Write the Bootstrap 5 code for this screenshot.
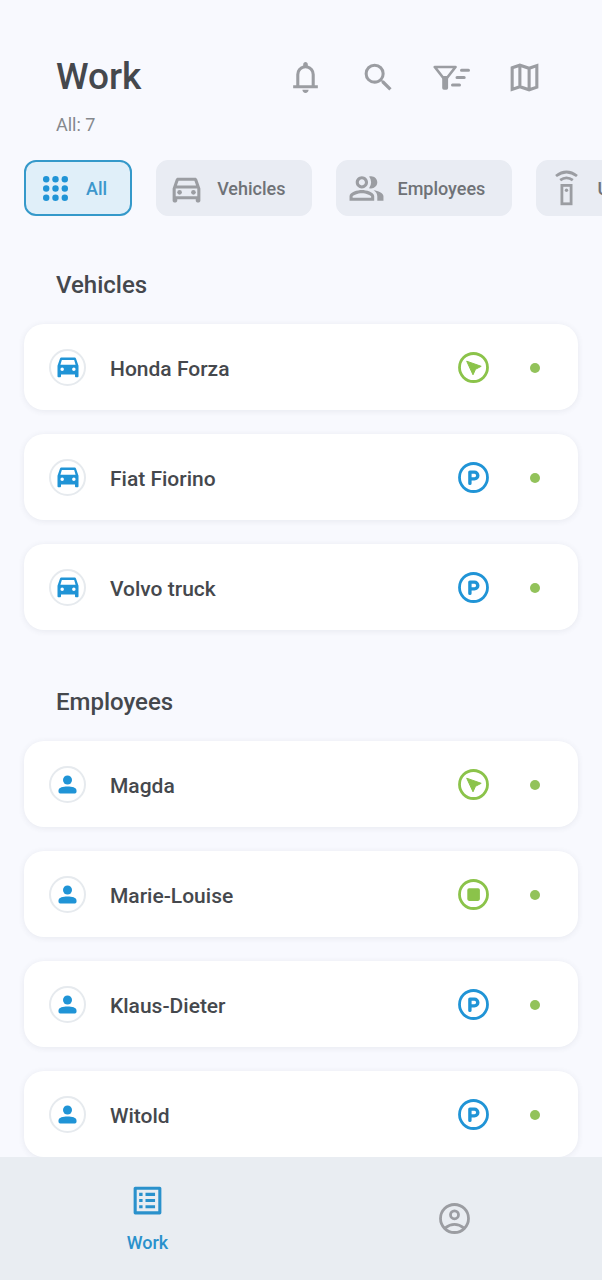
<!DOCTYPE html>
<html lang="en">
<head>
<meta charset="utf-8">
<meta name="viewport" content="width=device-width, initial-scale=1">
<title>Work</title>
<link href="https://cdn.jsdelivr.net/npm/bootstrap@5.3.0/dist/css/bootstrap.min.css" rel="stylesheet">
<style>
  :root { --ink:#45484d; --muted:#9b9da2; --label:#6f7277; --blue:#2094d6; --green:#8bc34a; --page:#f8f9fe; }
  body { font-family: Roboto, "Liberation Sans", sans-serif; background: var(--page); color: var(--ink); }
  svg { display: block; flex: none; }
  .app-head { padding: 52px 59px 0 56px; }
  .app-title { font-size: 37px; line-height: 50px; font-weight: 500; }
  .app-count { font-size: 18px; line-height: 24px; margin-top: 11px; color: #85888d; }
  .tools { gap: 36px; color: var(--muted); }
  .icon-btn { border: 0; background: none; padding: 0; color: inherit; }
  .chips { gap: 24px; padding: 23px 24px 0; overflow-x: auto; scrollbar-width: none; }
  .chips::-webkit-scrollbar { display: none; }
  .chip { display: flex; align-items: center; gap: 12px; height: 56px; padding: 0 26px 0 11px; border: 1px solid #e9ecf3; border-radius: 12px; background: #e9ecf3; color: var(--label); font-size: 18px; font-weight: 500; flex: none; }
  .chip svg { color: var(--muted); }
  .chip.active { background: #e0eff9; border: 2px solid #3599ca; padding-left: 11px; padding-right: 23px; color: #3d97cc; }
  .chip.active svg { color: var(--blue); }
  .group-title { font-size: 24px; line-height: 32px; font-weight: 500; margin: 0; padding: 53px 56px 23px; }
  .items { gap: 24px; padding: 0 24px; margin: 0; }
  section + section { margin-top: 3px; }
  .item { display: flex; align-items: center; padding: 25px 38px 24px 25px; border-radius: 20px; background: #fff; color: var(--ink); text-decoration: none; font-size: 21px; line-height: 37px; font-weight: 500; box-shadow: 0 1px 6px rgba(60,64,90,.09); }
  .item-name { padding: 3px 0 0 24px; line-height: 34px; }
  .avatar { width: 37px; height: 37px; border: 2px solid #e6eaee; border-radius: 50%; color: var(--blue); }
  .status-blue { color: var(--blue); }
  .status-green { color: var(--green); }
  .dot { width: 10px; height: 10px; border-radius: 50%; background: #92c25a; margin-left: 41px; }
  .tabs { gap: 12px; background: #e9edf2; z-index: 5; }
  .tab { display: flex; flex-direction: column; align-items: center; justify-content: center; flex: 1 1 0; min-height: 123px; text-decoration: none; color: var(--muted); font-size: 18px; line-height: 24px; font-weight: 500; }
  .tab.active { color: #2a91cc; gap: 12px; }
</style>
</head>
<body>
<svg width="0" height="0" class="position-absolute" aria-hidden="true">
  <symbol id="car" viewBox="0 0 24 24"><path fill="currentColor" d="M18.920 4.010C18.720 3.420 18.160 3 17.500 3h-11c-.66 0-1.210.42-1.420 1.010L3 10v9c0 .55.45 1 1 1h1c.55 0 1-.45 1-1v-1.500h12v1.500c0 .55.45 1 1 1h1c.55 0 1-.45 1-1v-9l-2.080-5.990zM7 14.500a1.500 1.500 0 1 1 0-3 1.500 1.500 0 0 1 0 3zm10 0a1.500 1.500 0 1 1 0-3 1.500 1.500 0 0 1 0 3zM5.500 9.200l1.200-4h10.600l1.200 4z"/></symbol>
  <symbol id="person" viewBox="0 0 24 24"><circle cx="12" cy="8" r="4" fill="currentColor"/><path fill="currentColor" d="M4 17.300C4 14.500 8 13.700 12 13.700s8 .8 8 3.600V18.500q0 1.500-1.500 1.500h-13Q4 20 4 18.500z"/></symbol>
  <symbol id="moving" viewBox="0 0 31 31"><circle cx="15.500" cy="15.500" r="14" fill="none" stroke="currentColor" stroke-width="2.800"/><path fill="currentColor" stroke="currentColor" stroke-width="1" stroke-linejoin="round" d="M8.700 9.200 23.200 14.300 17.500 17.300 15 22.800z"/></symbol>
  <symbol id="parked" viewBox="0 0 31 31"><circle cx="15.500" cy="15.500" r="14" fill="none" stroke="currentColor" stroke-width="2.800"/><path fill="none" stroke="currentColor" stroke-width="3.400" stroke-linecap="round" stroke-linejoin="round" d="M11.900 21.400V10.100h4.500a3.400 3.400 0 0 1 0 6.800h-4.500"/></symbol>
  <symbol id="stopped" viewBox="0 0 31 31"><circle cx="15.500" cy="15.500" r="14" fill="none" stroke="currentColor" stroke-width="2.800"/><rect x="9.300" y="9.300" width="12.600" height="12.600" rx="1.800" fill="currentColor"/></symbol>
</svg>

<div class="d-flex flex-column min-vh-100">
  <header class="app-head">
    <div class="d-flex align-items-center justify-content-between">
      <h1 class="app-title m-0">Work</h1>
      <div class="tools d-flex">
        <button class="icon-btn" type="button" aria-label="Notifications"><svg width="37" height="37" viewBox="0 0 24 24"><path fill="currentColor" d="M4 19v-2h2V10q0-2.075 1.250-3.688T10.500 4.200v-.7q0-.625.438-1.063T12 2t1.063.438.437 1.062v.7q2 .5 3.250 2.112T18 10v7h2V19zm8 3q-.825 0-1.413-.588T10 20h4q0 .825-.588 1.413T12 22m-4-5h8V10q0-1.650-1.175-2.825T12 6 9.175 7.175 8 10z"/></svg></button>
        <button class="icon-btn" type="button" aria-label="Search"><svg width="37" height="37" viewBox="0 0 24 24"><path fill="currentColor" d="M15.500 14h-.79l-.28-.27A6.471 6.471 0 0 0 16 9.500 6.500 6.500 0 1 0 9.500 16c1.610 0 3.090-.59 4.230-1.570l.27.28v.79l5 4.990L20.490 19l-4.990-5zm-6 0C7.010 14 5 11.990 5 9.500S7.010 5 9.500 5 14 7.010 14 9.500 11.990 14 9.500 14z"/></svg></button>
        <button class="icon-btn" type="button" aria-label="Filter"><svg width="37" height="37" viewBox="0 0 37 37"><path fill="none" stroke="currentColor" stroke-width="2.700" stroke-linejoin="round" d="M1.800 8h20.700l-8.200 10.500h-4.300z"/><path fill="currentColor" d="M9.200 17h5.900v12q0 1.700-1.700 1.700h-2.500q-1.700 0-1.700-1.700z"/><path fill="none" stroke="currentColor" stroke-width="3" stroke-linecap="round" d="M28.500 11.200h7M24 18.500h7.200M19.500 26h7"/></svg></button>
        <button class="icon-btn" type="button" aria-label="Map"><svg width="37" height="37" viewBox="0 0 24 24"><path fill="none" stroke="currentColor" stroke-width="2" d="M4 5.700 9 4l6 2 5-1.700v14L15 20l-6-2-5 1.700zM9 4v14M15 6v14"/></svg></button>
      </div>
    </div>
    <p class="app-count mb-0">All: 7</p>
  </header>

  <div class="chips d-flex" role="group" aria-label="Filter by type">
    <button class="chip active" type="button" aria-pressed="true"><svg width="37" height="37" viewBox="0 0 37 37" fill="currentColor"><circle cx="9.200" cy="9.200" r="3.200"/><circle cx="18.500" cy="9.200" r="3.200"/><circle cx="27.800" cy="9.200" r="3.200"/><circle cx="9.200" cy="18.500" r="3.200"/><circle cx="18.500" cy="18.500" r="3.200"/><circle cx="27.800" cy="18.500" r="3.200"/><circle cx="9.200" cy="27.800" r="3.200"/><circle cx="18.500" cy="27.800" r="3.200"/><circle cx="27.800" cy="27.800" r="3.200"/></svg>All</button>
    <button class="chip" type="button"><svg width="37" height="37" viewBox="0 0 24 24" fill="currentColor"><path d="M18.920 6.010C18.720 5.420 18.160 5 17.500 5h-11c-.66 0-1.210.42-1.420 1.010L3 12v8c0 .55.45 1 1 1h1c.55 0 1-.45 1-1v-1h12v1c0 .55.45 1 1 1h1c.55 0 1-.45 1-1v-8l-2.080-5.990zM6.850 7h10.290l1.080 3.110H5.770L6.850 7zM19 17H5v-5h14v5z"/><circle cx="7.500" cy="14.500" r="1.500"/><circle cx="16.500" cy="14.500" r="1.500"/></svg>Vehicles</button>
    <button class="chip" type="button"><svg width="37" height="37" viewBox="0 0 24 24" fill="currentColor"><path d="M16.670 13.130C18.040 14.060 19 15.320 19 17v3h4v-3c0-2.180-3.570-3.470-6.330-3.870zM15 12c2.210 0 4-1.790 4-4s-1.790-4-4-4c-.47 0-.91.1-1.330.24a5.980 5.980 0 0 1 0 7.520c.42.14.86.24 1.330.24zM9 12c2.210 0 4-1.790 4-4s-1.790-4-4-4-4 1.790-4 4 1.790 4 4 4zm0-6c1.100 0 2 .9 2 2s-.9 2-2 2-2-.9-2-2 .9-2 2-2zM9 13c-2.670 0-8 1.340-8 4v3h16v-3c0-2.660-5.330-4-8-4zm6 5H3v-.99C3.200 16.290 6.300 15 9 15s5.800 1.290 6 2v1z"/></svg>Employees</button>
    <button class="chip" type="button"><svg width="37" height="37" viewBox="0 0 37 37" fill="none" stroke="currentColor" stroke-width="2.800"><path d="M8 6q10.500-8 21 0M12.200 10.200q6.300-4.600 12.600 0"/><rect x="13.900" y="15.400" width="9.200" height="18.400"/><circle cx="18.500" cy="20.300" r="1.700" fill="currentColor" stroke="none"/></svg>Universal</button>
  </div>

  <main>
    <section aria-labelledby="g-vehicles">
      <h2 class="group-title" id="g-vehicles">Vehicles</h2>
      <ul class="items list-unstyled d-flex flex-column">
        <li><a class="item" href="#"><span class="avatar d-flex align-items-center justify-content-center"><svg width="28" height="28"><use href="#car"/></svg></span><span class="item-name flex-grow-1">Honda Forza</span><svg class="status-green" width="31" height="31" role="img" aria-label="Moving"><use href="#moving"/></svg><span class="dot"></span></a></li>
        <li><a class="item" href="#"><span class="avatar d-flex align-items-center justify-content-center"><svg width="28" height="28"><use href="#car"/></svg></span><span class="item-name flex-grow-1">Fiat Fiorino</span><svg class="status-blue" width="31" height="31" role="img" aria-label="Parked"><use href="#parked"/></svg><span class="dot"></span></a></li>
        <li><a class="item" href="#"><span class="avatar d-flex align-items-center justify-content-center"><svg width="28" height="28"><use href="#car"/></svg></span><span class="item-name flex-grow-1">Volvo truck</span><svg class="status-blue" width="31" height="31" role="img" aria-label="Parked"><use href="#parked"/></svg><span class="dot"></span></a></li>
      </ul>
    </section>
    <section aria-labelledby="g-employees">
      <h2 class="group-title" id="g-employees">Employees</h2>
      <ul class="items list-unstyled d-flex flex-column">
        <li><a class="item" href="#"><span class="avatar d-flex align-items-center justify-content-center"><svg width="27" height="27"><use href="#person"/></svg></span><span class="item-name flex-grow-1">Magda</span><svg class="status-green" width="31" height="31" role="img" aria-label="Moving"><use href="#moving"/></svg><span class="dot"></span></a></li>
        <li><a class="item" href="#"><span class="avatar d-flex align-items-center justify-content-center"><svg width="27" height="27"><use href="#person"/></svg></span><span class="item-name flex-grow-1">Marie-Louise</span><svg class="status-green" width="31" height="31" role="img" aria-label="Stopped"><use href="#stopped"/></svg><span class="dot"></span></a></li>
        <li><a class="item" href="#"><span class="avatar d-flex align-items-center justify-content-center"><svg width="27" height="27"><use href="#person"/></svg></span><span class="item-name flex-grow-1">Klaus-Dieter</span><svg class="status-blue" width="31" height="31" role="img" aria-label="Parked"><use href="#parked"/></svg><span class="dot"></span></a></li>
        <li><a class="item" href="#"><span class="avatar d-flex align-items-center justify-content-center"><svg width="27" height="27"><use href="#person"/></svg></span><span class="item-name flex-grow-1">Witold</span><svg class="status-blue" width="31" height="31" role="img" aria-label="Parked"><use href="#parked"/></svg><span class="dot"></span></a></li>
      </ul>
    </section>
  </main>

  <nav class="tabs d-flex sticky-bottom mt-auto" aria-label="Main">
    <a class="tab active" href="#" aria-current="page"><svg width="37" height="37" viewBox="0 0 24 24"><rect x="4" y="4" width="16" height="16" fill="none" stroke="currentColor" stroke-width="2" stroke-linejoin="round"/><path fill="currentColor" d="M6.600 7h2.200v2H6.600zM10.700 7h6.200v2h-6.200zM6.600 11h2.200v2H6.600zM10.700 11h6.200v2h-6.200zM6.600 15h2.200v2H6.600zM10.700 15h6.200v2h-6.200z"/></svg>Work</a>
    <a class="tab" href="#" aria-label="Account"><svg width="31" height="31" viewBox="0 0 31 31" fill="none" stroke="currentColor" stroke-width="2.800"><circle cx="15.500" cy="15.500" r="14"/><circle cx="15.500" cy="11.800" r="4"/><path d="M6 25.200q9.500-7.600 19 0"/></svg></a>
  </nav>
</div>
<script src="https://cdn.jsdelivr.net/npm/bootstrap@5.3.0/dist/js/bootstrap.bundle.min.js"></script>
</body>
</html>
